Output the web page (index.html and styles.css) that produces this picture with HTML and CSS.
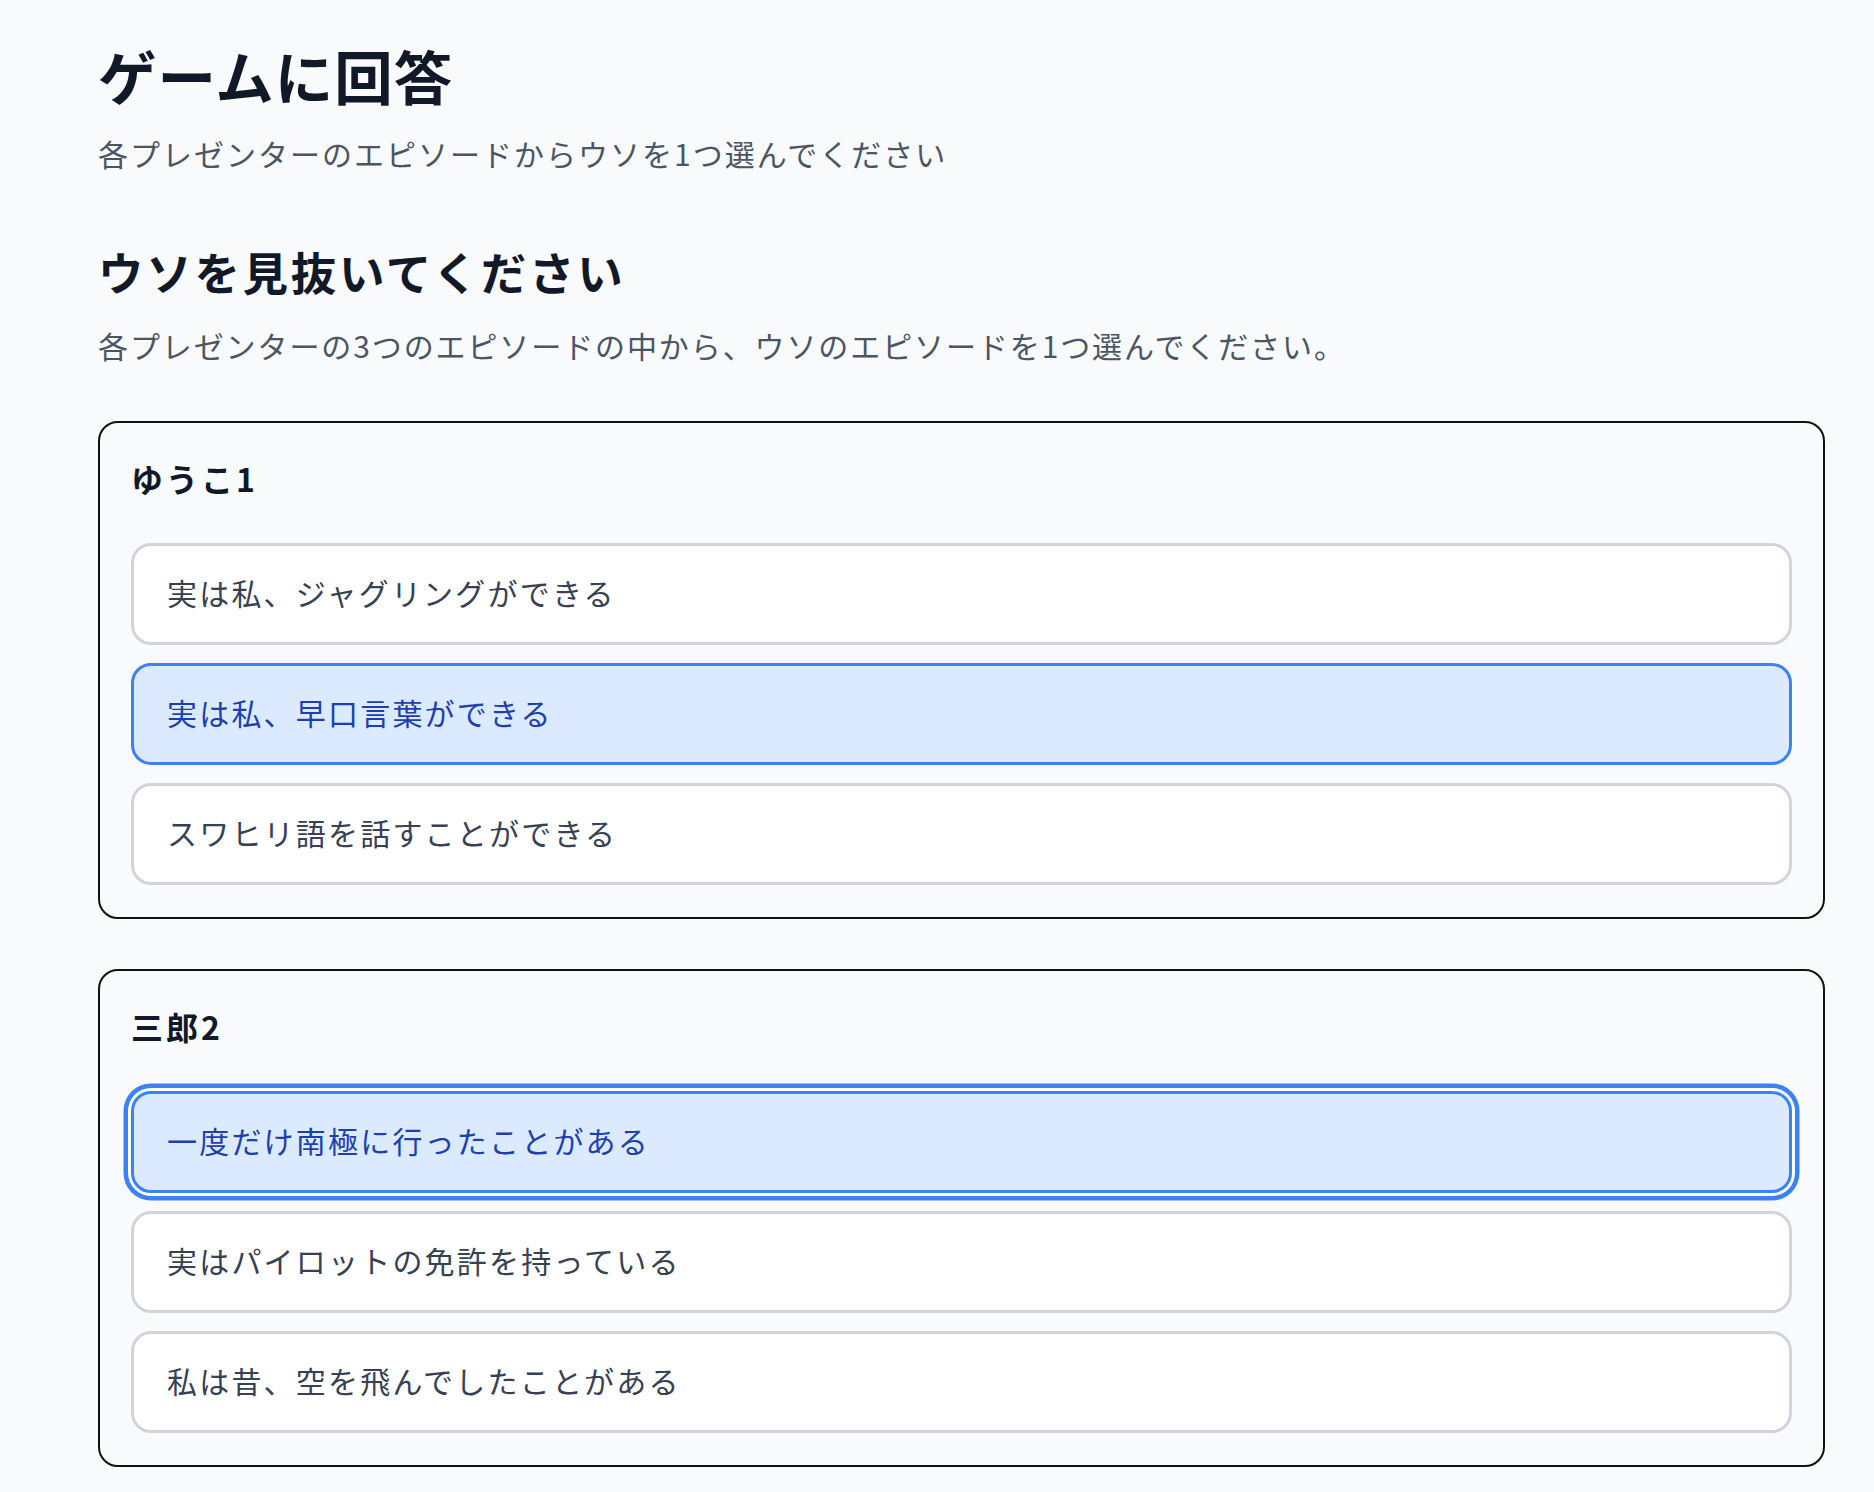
FILE: index.html
```html
<!DOCTYPE html>
<html lang="ja">
<head>
<meta charset="utf-8">
<title>ゲームに回答</title>
<link rel="stylesheet" href="styles.css">
</head>
<body>
<main class="page">
  <header class="page-header">
    <h1 class="page-title">ゲームに回答</h1>
    <p class="page-lead">各プレゼンターのエピソードからウソを1つ選んでください</p>
  </header>

  <section class="quiz">
    <h2 class="quiz-title">ウソを見抜いてください</h2>
    <p class="quiz-lead">各プレゼンターの3つのエピソードの中から、ウソのエピソードを1つ選んでください。</p>

    <div class="presenters">
      <div class="presenter">
        <h3 class="presenter-name">ゆうこ1</h3>
        <div class="choices">
          <button type="button" class="choice">実は私、ジャグリングができる</button>
          <button type="button" class="choice is-selected">実は私、早口言葉ができる</button>
          <button type="button" class="choice">スワヒリ語を話すことができる</button>
        </div>
      </div>

      <div class="presenter">
        <h3 class="presenter-name">三郎2</h3>
        <div class="choices">
          <button type="button" class="choice is-selected is-focused">一度だけ南極に行ったことがある</button>
          <button type="button" class="choice">実はパイロットの免許を持っている</button>
          <button type="button" class="choice">私は昔、空を飛んでしたことがある</button>
        </div>
      </div>
    </div>
  </section>
</main>
</body>
</html>
```

FILE: styles.css
```css
* {
  box-sizing: border-box;
}

html,
body {
  margin: 0;
  padding: 0;
  background: #f9fafb;
}

body {
  font-family: "Noto Sans CJK JP", "Noto Sans", sans-serif;
  color: #111827;
}

.page {
  width: 1727px;
  margin-left: 98px;
  padding: 40px 0 40px;
}

.page-title {
  margin: 0;
  font-size: 58.5px;
  line-height: 69px;
  font-weight: 700;
  letter-spacing: 1px;
  color: #111827;
}

.page-lead {
  margin: 24px 0 0;
  font-size: 30px;
  line-height: 40px;
  letter-spacing: 2px;
  color: #4b5563;
}

.quiz {
  margin-top: 70px;
}

.quiz-title {
  margin: 0;
  font-size: 45.5px;
  line-height: 56px;
  font-weight: 700;
  letter-spacing: 2.7px;
  color: #111827;
}

.quiz-lead {
  margin: 26px 0 0;
  font-size: 30px;
  line-height: 40px;
  letter-spacing: 1.9px;
  color: #4b5563;
}

.presenters {
  display: flex;
  flex-direction: column;
  gap: 50px;
  margin-top: 56px;
}

.presenter {
  border: 2px solid #111111;
  border-radius: 20px;
  padding: 35px 31px 32px;
  background: #f9fafb;
}

.presenter-name {
  margin: 0 0 45px;
  font-size: 32px;
  line-height: 40px;
  font-weight: 700;
  letter-spacing: 3px;
  color: #111827;
}

.choices {
  display: flex;
  flex-direction: column;
  gap: 18px;
}

.choice {
  display: block;
  width: 100%;
  margin: 0;
  padding: 26px 33px 30px;
  border: 3px solid #d1d5db;
  border-radius: 20px;
  background: #ffffff;
  font-family: inherit;
  font-size: 30px;
  line-height: 40px;
  letter-spacing: 2.2px;
  text-align: left;
  color: #374151;
  cursor: pointer;
}

.choice.is-selected {
  border-color: #3b82f6;
  background: #dbeafe;
  color: #1e40af;
}

.choice.is-focused {
  box-shadow: 0 0 0 3px #ffffff, 0 0 0 7.5px #3b82f6;
}
```
